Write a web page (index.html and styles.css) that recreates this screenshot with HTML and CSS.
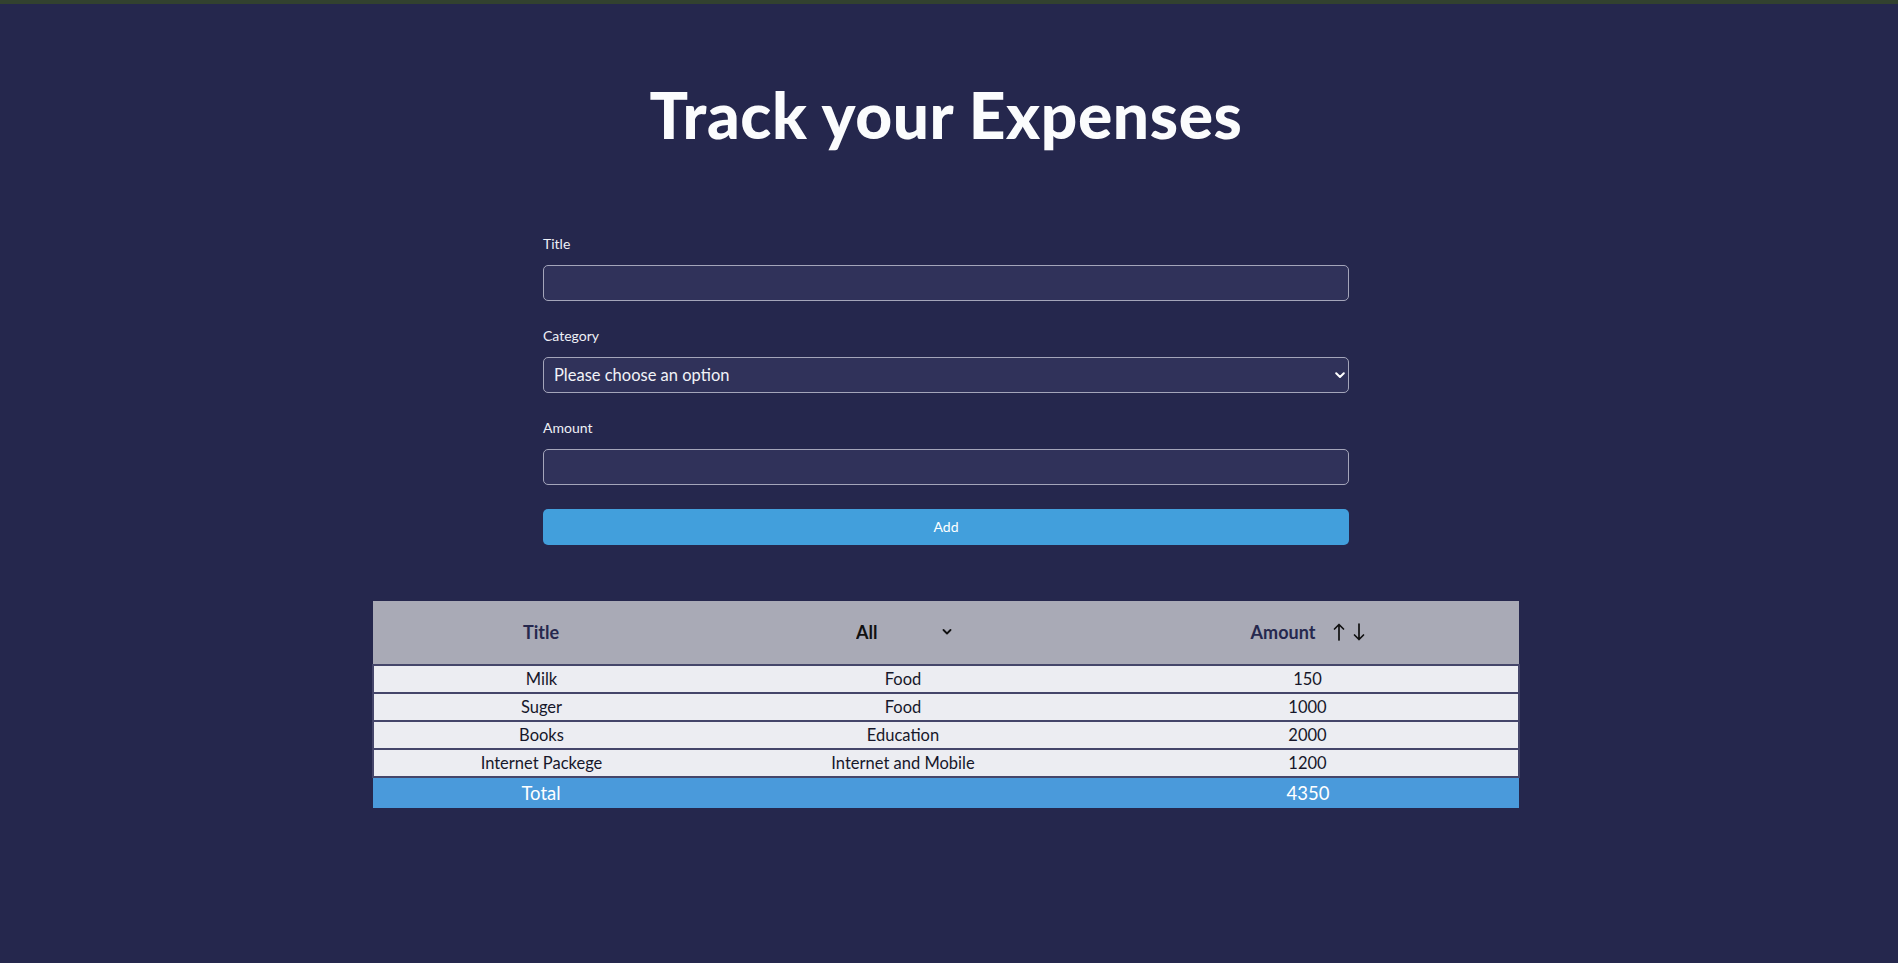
FILE: index.html
```html
<!DOCTYPE html>
<html lang="en">
<head>
<meta charset="utf-8">
<title>Expense Tracker</title>
<link rel="stylesheet" href="styles.css">
</head>
<body>
<div class="topbar"></div>
<main class="page">
  <h1 class="heading">Track your Expenses</h1>

  <form class="expense-form">
    <div class="field">
      <label class="field-label" for="title">Title</label>
      <input class="field-input" id="title" type="text">
    </div>
    <div class="field">
      <label class="field-label" for="category">Category</label>
      <div class="select-wrap">
        <select class="field-input field-select" id="category">
          <option>Please choose an option</option>
          <option>Food</option>
          <option>Education</option>
          <option>Internet and Mobile</option>
        </select>
        <svg class="select-chevron" width="10" height="7" viewBox="0 0 10 7"><path d="M1.2 1.2 L5 5 L8.8 1.2" fill="none" stroke="#ffffff" stroke-width="2" stroke-linecap="round" stroke-linejoin="round"/></svg>
      </div>
    </div>
    <div class="field">
      <label class="field-label" for="amount">Amount</label>
      <input class="field-input" id="amount" type="number">
    </div>
    <button class="add-btn" type="button">Add</button>
  </form>

  <table class="expense-table">
    <colgroup>
      <col class="col-title">
      <col class="col-cat">
      <col class="col-amount">
    </colgroup>
    <thead>
      <tr>
        <th class="th-title">Title</th>
        <th>
          <div class="filter-wrap">
            <select class="filter-select">
              <option>All</option>
              <option>Food</option>
              <option>Education</option>
              <option>Internet and Mobile</option>
            </select>
            <svg class="filter-chevron" width="10" height="6" viewBox="0 0 10 6"><path d="M1.5 1 L5 4.5 L8.5 1" fill="none" stroke="#111111" stroke-width="1.8" stroke-linecap="round" stroke-linejoin="round"/></svg>
          </div>
        </th>
        <th>
          <div class="amount-head">
            <span class="th-amount">Amount</span>
            <span class="sort-arrows">
              <svg width="12" height="18" viewBox="0 0 12 18"><path d="M6 17 V1.5 M1.5 6 L6 1.5 L10.5 6" fill="none" stroke="#111111" stroke-width="1.7" stroke-linecap="round" stroke-linejoin="round"/></svg>
              <svg width="12" height="18" viewBox="0 0 12 18"><path d="M6 1 V16.5 M1.5 12 L6 16.5 L10.5 12" fill="none" stroke="#111111" stroke-width="1.7" stroke-linecap="round" stroke-linejoin="round"/></svg>
            </span>
          </div>
        </th>
      </tr>
    </thead>
    <tbody>
      <tr><td>Milk</td><td>Food</td><td>150</td></tr>
      <tr><td>Suger</td><td>Food</td><td>1000</td></tr>
      <tr><td>Books</td><td>Education</td><td>2000</td></tr>
      <tr><td>Internet Packege</td><td>Internet and Mobile</td><td>1200</td></tr>
    </tbody>
    <tfoot>
      <tr class="total-row"><td>Total</td><td></td><td>4350</td></tr>
    </tfoot>
  </table>
</main>
</body>
</html>
```
FILE: styles.css
```css
* { box-sizing: border-box; }

html, body {
  margin: 0;
  padding: 0;
}

body {
  background: #25274d;
  font-family: "Lato", "Noto Sans", sans-serif;
  color: #ffffff;
  min-height: 963px;
}

.topbar {
  height: 4px;
  background: #32412f;
}

.page {
  display: flex;
  flex-direction: column;
  align-items: center;
  padding-right: 6px;
}

.heading {
  margin: 73px 0 0;
  font-size: 64px;
  line-height: 1.2;
  font-weight: 900;
  letter-spacing: 0.6px;
  color: #fbfcfd;
}

.expense-form {
  width: 806px;
  margin-top: 79px;
  display: flex;
  flex-direction: column;
}

.field {
  display: flex;
  flex-direction: column;
  margin-bottom: 24px;
}

.field-label {
  font-size: 14px;
  line-height: 20px;
  padding-top: 1px;
  margin-bottom: 11px;
  color: #eef0f6;
}

.field-input {
  height: 36px;
  width: 100%;
  background: #30325a;
  border: 1px solid #a4a5ba;
  border-radius: 5px;
  color: #f2f3f8;
  font-family: inherit;
  font-size: 16.5px;
  padding: 0 10px;
  outline: none;
}

.select-wrap {
  position: relative;
}

.field-select {
  appearance: none;
  -webkit-appearance: none;
}

.select-chevron {
  position: absolute;
  right: 4px;
  top: 15px;
}

.add-btn {
  height: 36px;
  border: none;
  border-radius: 5px;
  background: #429fdc;
  color: #ffffff;
  font-family: inherit;
  font-size: 14px;
  padding: 0 0 1px;
}

.expense-table {
  width: 1146px;
  margin-top: 56px;
  border-collapse: collapse;
  table-layout: fixed;
}

.col-title { width: 336px; }
.col-cat { width: 388px; }
.col-amount { width: 422px; }

.expense-table thead tr {
  background: #a9aab6;
  height: 64px;
}

.expense-table th {
  font-size: 18px;
  font-weight: 700;
  color: #26284e;
  padding: 0;
  text-align: center;
}

.filter-wrap {
  position: relative;
  width: 100px;
  margin: 0 auto;
}

.filter-select {
  appearance: none;
  -webkit-appearance: none;
  width: 100px;
  background: transparent;
  border: none;
  font-family: inherit;
  font-size: 18px;
  font-weight: 700;
  color: #111111;
  padding: 0 3px;
  outline: none;
}

.filter-chevron {
  position: absolute;
  right: 1px;
  top: 8px;
}

.amount-head {
  display: flex;
  justify-content: center;
  align-items: center;
  gap: 18px;
}

.sort-arrows {
  display: flex;
  gap: 8px;
}

.sort-arrows svg {
  display: block;
}

.expense-table tbody tr {
  background: #ecedf2;
  border: 2px solid #45466a;
}

.expense-table td {
  height: 28px;
  padding: 0;
  text-align: center;
  font-size: 16.5px;
  color: #16172a;
}

.total-row {
  background: #4a9adb;
}

.expense-table .total-row td {
  height: 31px;
  font-size: 18.5px;
  color: #ffffff;
}
```
